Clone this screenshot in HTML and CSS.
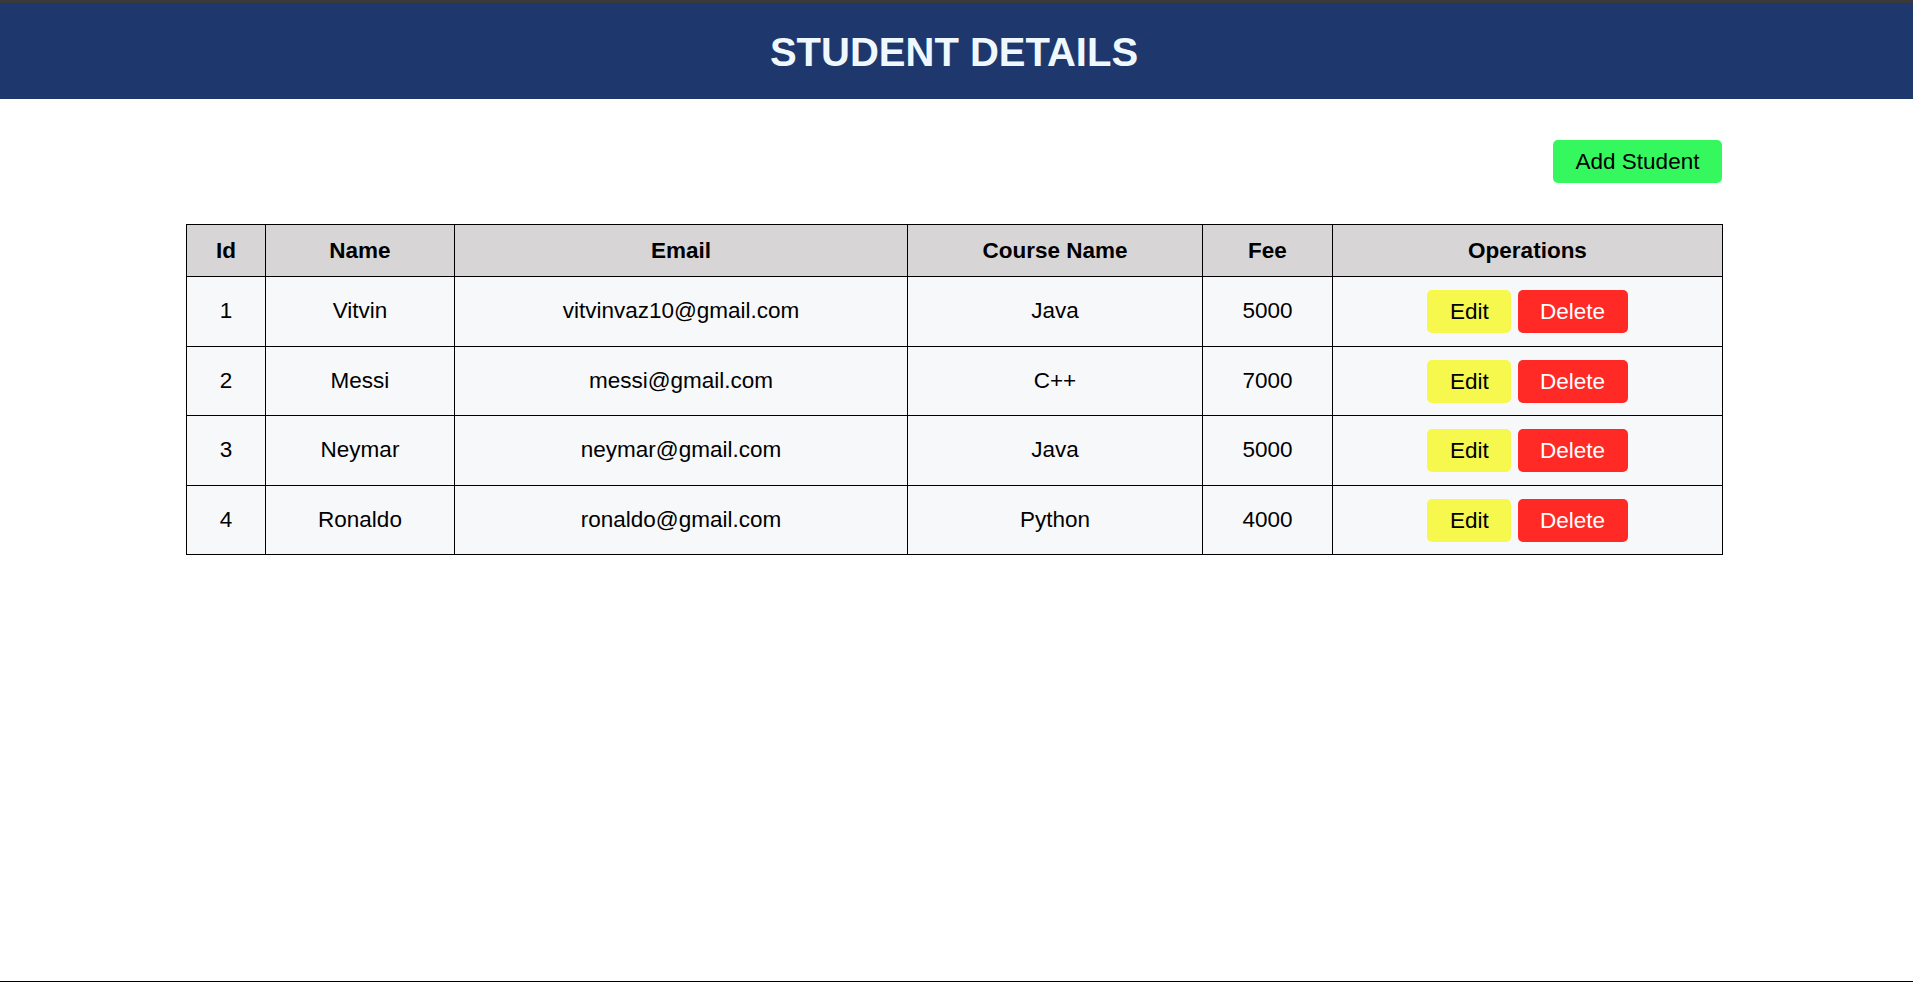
FILE: index.html
```html
<!DOCTYPE html>
<html lang="en">
<head>
<meta charset="utf-8">
<title>Student Details</title>
<link rel="stylesheet" href="styles.css">
</head>
<body>
<div class="page">
  <header class="topbar">
    <h1 class="title">STUDENT DETAILS</h1>
  </header>
  <main class="content">
    <div class="toolbar">
      <button class="btn btn-add">Add Student</button>
    </div>
    <table class="students">
      <colgroup>
        <col class="c-id"><col class="c-name"><col class="c-email"><col class="c-course"><col class="c-fee"><col class="c-ops">
      </colgroup>
      <thead>
        <tr><th>Id</th><th>Name</th><th>Email</th><th>Course Name</th><th>Fee</th><th>Operations</th></tr>
      </thead>
      <tbody>
        <tr><td>1</td><td>Vitvin</td><td>vitvinvaz10@gmail.com</td><td>Java</td><td>5000</td><td><button class="btn btn-edit">Edit</button> <button class="btn btn-delete">Delete</button></td></tr>
        <tr><td>2</td><td>Messi</td><td>messi@gmail.com</td><td>C++</td><td>7000</td><td><button class="btn btn-edit">Edit</button> <button class="btn btn-delete">Delete</button></td></tr>
        <tr><td>3</td><td>Neymar</td><td>neymar@gmail.com</td><td>Java</td><td>5000</td><td><button class="btn btn-edit">Edit</button> <button class="btn btn-delete">Delete</button></td></tr>
        <tr><td>4</td><td>Ronaldo</td><td>ronaldo@gmail.com</td><td>Python</td><td>4000</td><td><button class="btn btn-edit">Edit</button> <button class="btn btn-delete">Delete</button></td></tr>
      </tbody>
    </table>
  </main>
</div>
</body>
</html>
```
FILE: styles.css
```css
* { box-sizing: border-box; }
html, body { margin: 0; padding: 0; }
body {
  font-family: "Liberation Sans", Arial, sans-serif;
  font-size: 22.5px;
  color: #000;
  background: #fff;
}
.page {
  min-height: 100vh;
  display: flex;
  flex-direction: column;
  border-top: 3px solid #3a3a3d;
  border-bottom: 1px solid #000;
}
.topbar {
  height: 96px;
  background: #1e386d;
  display: flex;
  align-items: center;
  justify-content: center;
  padding-right: 5px;
}
.title {
  margin: 0;
  font-size: 40px;
  font-weight: 700;
  color: #f0f8ff;
  line-height: 1;
  padding-top: 1px;
}
.content {
  width: 1536px;
  margin-left: 186px;
}
.toolbar {
  display: flex;
  justify-content: flex-end;
  margin-top: 41px;
}
.btn {
  font-family: inherit;
  font-size: 22.5px;
  border: none;
  border-radius: 5px;
  height: 43px;
  line-height: 43px;
  padding: 0;
  color: #000;
  cursor: pointer;
  vertical-align: middle;
  text-align: center;
}
.btn-add {
  background: #35f85f;
  width: 169px;
}
.btn-edit {
  background: #f6f84e;
  width: 84px;
}
.btn-delete {
  background: #ff2a26;
  color: #fff;
  width: 110px;
}
.students {
  margin-top: 41px;
  width: 1536px;
  border-collapse: collapse;
  table-layout: fixed;
}
.c-id { width: 79px; }
.c-name { width: 189px; }
.c-email { width: 453px; }
.c-course { width: 295px; }
.c-fee { width: 130px; }
.c-ops { width: 390px; }
.students th,
.students td {
  border: 1px solid #000;
  text-align: center;
  padding: 0;
}
.students th {
  background: #d7d5d6;
  font-weight: 700;
  font-size: 22.5px;
  height: 52px;
}
.students td {
  background: #f7f8fa;
  height: 69.6px;
}
.students td:last-child {
  padding-top: 1px;
  word-spacing: 0;
}
```
